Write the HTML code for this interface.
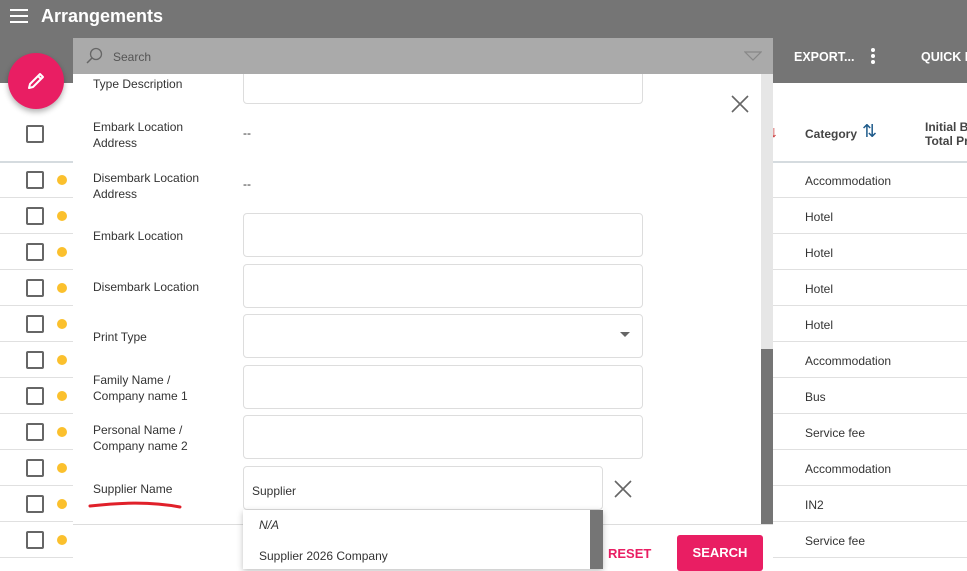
<!DOCTYPE html>
<html><head><meta charset="utf-8"><style>
*{box-sizing:border-box;margin:0;padding:0}
body{width:967px;height:569px;overflow:hidden;background:#fff;font-family:"Liberation Sans",Arial,sans-serif;position:relative;font-size:12px;color:#333}
.abs{position:absolute;white-space:nowrap}
.hdr{left:0;top:0;width:967px;height:83px;background:#757575}
.title{left:41px;top:6px;color:#fff;font-size:18px;font-weight:bold}
.ham{left:10px;width:18px;height:2px;background:#fff}
.hb{color:#fff;font-weight:bold;font-size:12.5px;top:50px}
.row{left:0;width:967px;height:1px;background:#e0e0e0}
.cb{left:26px;width:18px;height:18px;border:2px solid #666;border-radius:2px}
.dot{left:57px;width:10px;height:10px;border-radius:50%;background:#fbc02d}
.cat{left:805px;font-size:12px;color:#333}
.modal{left:73px;top:38px;width:700px;height:531px;background:#fff}
.sbar{left:73px;top:38px;width:700px;height:36px;background:#aaa}
.lbl{left:93px;font-size:12px;color:#333;line-height:16px}
.inp{left:243px;width:400px;height:44px;border:1px solid #ddd;border-radius:4px;background:#fff}
.fab{left:8px;top:53px;width:56px;height:56px;border-radius:50%;background:#e91e63;box-shadow:0 3px 6px rgba(0,0,0,.3)}
</style></head><body>
<div class="abs hdr"></div>
<div class="abs ham" style="top:9px"></div><div class="abs ham" style="top:15px"></div><div class="abs ham" style="top:21px"></div>
<div class="abs title">Arrangements</div>
<div class="abs hb" style="left:794px">EXPORT...</div>
<div class="abs" style="left:871px;top:48px;width:4px;height:16px"><div style="width:4px;height:4px;border-radius:50%;background:#fff;margin-bottom:2px"></div><div style="width:4px;height:4px;border-radius:50%;background:#fff;margin-bottom:2px"></div><div style="width:4px;height:4px;border-radius:50%;background:#fff"></div></div>
<div class="abs hb" style="left:921px">QUICK R</div>

<div class="abs cb" style="top:125px"></div>
<div class="abs" style="left:770px;top:124px;color:#c62828;font-size:16px">↓</div>
<div class="abs" style="left:805px;top:127px;font-weight:bold;color:#444">Category</div>
<div class="abs" style="left:862px;top:121px;font-size:18px;color:#1e5a8a">⇅</div>
<div class="abs" style="left:925px;top:120px;font-weight:bold;color:#444;line-height:14px">Initial Bu<br>Total Pr</div>
<div class="abs row" style="top:161px;height:2px;background:#d5dbdf"></div>

<div class="abs cb" style="top:171px"></div><div class="abs dot" style="top:175px"></div><div class="abs cat" style="top:174px">Accommodation</div><div class="abs row" style="top:197px"></div>
<div class="abs cb" style="top:207px"></div><div class="abs dot" style="top:211px"></div><div class="abs cat" style="top:210px">Hotel</div><div class="abs row" style="top:233px"></div>
<div class="abs cb" style="top:243px"></div><div class="abs dot" style="top:247px"></div><div class="abs cat" style="top:246px">Hotel</div><div class="abs row" style="top:269px"></div>
<div class="abs cb" style="top:279px"></div><div class="abs dot" style="top:283px"></div><div class="abs cat" style="top:282px">Hotel</div><div class="abs row" style="top:305px"></div>
<div class="abs cb" style="top:315px"></div><div class="abs dot" style="top:319px"></div><div class="abs cat" style="top:318px">Hotel</div><div class="abs row" style="top:341px"></div>
<div class="abs cb" style="top:351px"></div><div class="abs dot" style="top:355px"></div><div class="abs cat" style="top:354px">Accommodation</div><div class="abs row" style="top:377px"></div>
<div class="abs cb" style="top:387px"></div><div class="abs dot" style="top:391px"></div><div class="abs cat" style="top:390px">Bus</div><div class="abs row" style="top:413px"></div>
<div class="abs cb" style="top:423px"></div><div class="abs dot" style="top:427px"></div><div class="abs cat" style="top:426px">Service fee</div><div class="abs row" style="top:449px"></div>
<div class="abs cb" style="top:459px"></div><div class="abs dot" style="top:463px"></div><div class="abs cat" style="top:462px">Accommodation</div><div class="abs row" style="top:485px"></div>
<div class="abs cb" style="top:495px"></div><div class="abs dot" style="top:499px"></div><div class="abs cat" style="top:498px">IN2</div><div class="abs row" style="top:521px"></div>
<div class="abs cb" style="top:531px"></div><div class="abs dot" style="top:535px"></div><div class="abs cat" style="top:534px">Service fee</div><div class="abs row" style="top:557px"></div>

<div class="abs modal"></div>

<div class="abs" style="left:761px;top:74px;width:12px;height:450px;background:#e6e6e6"></div>
<div class="abs" style="left:761px;top:349px;width:12px;height:175px;background:#757575"></div>

<div class="abs inp" style="top:60px"></div>
<div class="abs lbl" style="top:76px">Type Description</div>
<div class="abs sbar"></div>
<svg class="abs" style="left:85px;top:46px" width="20" height="20" viewBox="0 0 20 20"><circle cx="11" cy="8" r="5.5" fill="none" stroke="#666" stroke-width="1.3"/><line x1="7" y1="12" x2="2" y2="17" stroke="#666" stroke-width="1.5"/></svg>
<div class="abs" style="left:113px;top:50px;color:#555;font-size:12px">Search</div>
<svg class="abs" style="left:744px;top:51px" width="18" height="10"><path d="M1 1 L17 1 L9 9 Z" fill="none" stroke="#888" stroke-width="1.2"/></svg>

<svg class="abs" style="left:731px;top:95px" width="18" height="18"><path d="M1 1 L17 17 M17 1 L1 17" stroke="#666" stroke-width="1.6"/></svg>
<div class="abs lbl" style="top:119px">Embark Location<br>Address</div>
<div class="abs" style="left:243px;top:126px">--</div>
<div class="abs lbl" style="top:170px">Disembark Location<br>Address</div>
<div class="abs" style="left:243px;top:177px">--</div>
<div class="abs inp" style="top:213px"></div><div class="abs lbl" style="top:228px">Embark Location</div>
<div class="abs inp" style="top:264px"></div><div class="abs lbl" style="top:279px">Disembark Location</div>
<div class="abs inp" style="top:314px"></div><div class="abs lbl" style="top:329px">Print Type</div>
<svg class="abs" style="left:620px;top:332px" width="10" height="6"><path d="M0 0 L10 0 L5 5 Z" fill="#666"/></svg>
<div class="abs inp" style="top:365px"></div><div class="abs lbl" style="top:372px">Family Name /<br>Company name 1</div>
<div class="abs inp" style="top:415px"></div><div class="abs lbl" style="top:422px">Personal Name /<br>Company name 2</div>
<div class="abs inp" style="top:466px;width:360px"></div><div class="abs lbl" style="top:481px">Supplier Name</div>
<div class="abs" style="left:252px;top:484px">Supplier</div>
<svg class="abs" style="left:88px;top:499px" width="96" height="12"><path d="M2 7 C30 4 60 2 92 8" fill="none" stroke="#e0202a" stroke-width="3" stroke-linecap="round"/></svg>
<svg class="abs" style="left:614px;top:480px" width="18" height="18"><path d="M1 1 L17 17 M17 1 L1 17" stroke="#666" stroke-width="1.6"/></svg>

<div class="abs" style="left:73px;top:524px;width:700px;height:1px;background:#ddd"></div>
<div class="abs" style="left:608px;top:546px;color:#e91e63;font-weight:bold;font-size:13px">RESET</div>
<div class="abs" style="left:677px;top:535px;width:86px;height:36px;background:#e91e63;border-radius:3px;color:#fff;font-weight:bold;font-size:13px;text-align:center;line-height:36px">SEARCH</div>

<div class="abs" style="left:243px;top:510px;width:360px;height:59px;background:#fff;box-shadow:0 2px 6px rgba(0,0,0,.25)"></div>
<div class="abs" style="left:590px;top:510px;width:13px;height:59px;background:#e6e6e6"></div>
<div class="abs" style="left:590px;top:510px;width:13px;height:59px;background:#757575"></div>
<div class="abs" style="left:259px;top:518px;font-style:italic">N/A</div>
<div class="abs" style="left:259px;top:549px">Supplier 2026 Company</div>

<div class="abs fab"></div>
<svg class="abs" style="left:26px;top:71px" width="20" height="20" viewBox="0 0 20 20"><path d="M3 17 L4 13 L14 3 L17 6 L7 16 Z M12 5 L15 8" fill="none" stroke="#fff" stroke-width="2" stroke-linejoin="round"/></svg>
</body></html>
